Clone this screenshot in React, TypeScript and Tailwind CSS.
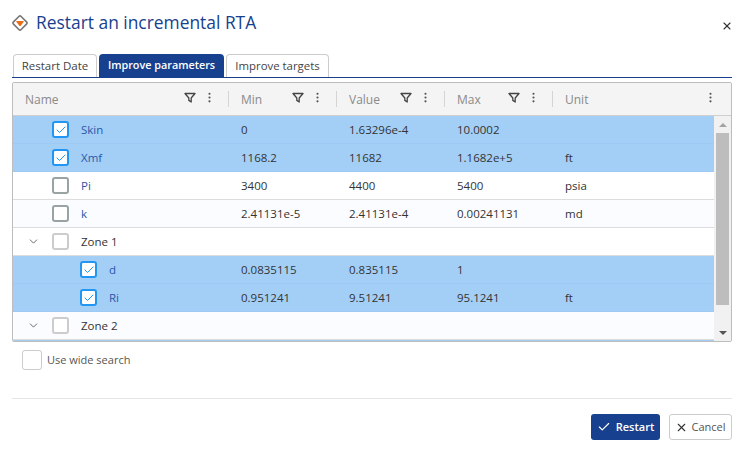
// libs
import { Check, ChevronDown, X, EllipsisVertical } from "lucide-react";

const FONT = "font-['Open_Sans','Noto_Sans',sans-serif]";

type RowData = {
  name: string;
  min?: string;
  value?: string;
  max?: string;
  unit?: string;
  checked?: boolean;
  group?: boolean;
  child?: boolean;
};

const rows: RowData[] = [
  { name: "Skin", min: "0", value: "1.63296e-4", max: "10.0002", checked: true },
  { name: "Xmf", min: "1168.2", value: "11682", max: "1.1682e+5", unit: "ft", checked: true },
  { name: "Pi", min: "3400", value: "4400", max: "5400", unit: "psia" },
  { name: "k", min: "2.41131e-5", value: "2.41131e-4", max: "0.00241131", unit: "md" },
  { name: "Zone 1", group: true },
  { name: "d", min: "0.0835115", value: "0.835115", max: "1", checked: true, child: true },
  { name: "Ri", min: "0.951241", value: "9.51241", max: "95.1241", unit: "ft", checked: true, child: true },
  { name: "Zone 2", group: true },
];

function FilterIcon() {
  return (
    <svg width="12" height="12" viewBox="0 0 12 12" fill="none" stroke="#444" strokeWidth="1.3">
      <path d="M1 1.5h10L7.2 6v4L4.8 8.4V6z" strokeLinejoin="round" />
    </svg>
  );
}

function Checkbox({ checked, light }: { checked?: boolean; light?: boolean }) {
  return (
    <div
      className={`w-[13px] h-[13px] box-content rounded-[3px] border-2 bg-white flex items-center justify-center ${
        checked ? "border-[#2196f3]" : light ? "border-[#ccc]" : "border-[#99a3a3]"
      }`}
    >
      {checked && <Check size={12} strokeWidth={2} className="text-[#2196f3]" />}
    </div>
  );
}

function HeaderCell({
  label,
  width,
  filter = true,
  pad = "pr-[12px]",
}: {
  label: string;
  width: string;
  filter?: boolean;
  pad?: string;
}) {
  return (
    <div className={`${width} h-full flex items-center pl-3 ${pad}`}>
      <span className="flex-1 text-xs text-[#8a8a8a] mt-[2px]">{label}</span>
      {filter && (
        <span className="mr-[7px] mb-[3px]">
          <FilterIcon />
        </span>
      )}
      <EllipsisVertical size={13} strokeWidth={2} className="text-[#555] mb-[3px]" />
    </div>
  );
}

function Row({ row, index }: { row: RowData; index: number }) {
  const bg = row.checked ? "bg-[#a3cff7]" : index % 2 === 1 ? "bg-[#fbfcff]" : "bg-white";
  const border = row.checked ? "border-[#9ccaf4]" : "border-[#dcdcdc]";
  return (
    <div className={`h-[28px] shrink-0 flex items-center border-b ${bg} ${border} text-[11.5px] text-[#333]`}>
      <div className="w-[215px] flex items-center">
        {row.group ? (
          <span className="w-[39px] pl-[14px] text-[#555]">
            <ChevronDown size={13} strokeWidth={1.6} />
          </span>
        ) : (
          <span className={row.child ? "w-[67px]" : "w-[39px]"} />
        )}
        <Checkbox checked={row.checked} light={row.group} />
        <span className={`ml-3 ${row.group ? "text-[#333]" : "text-[#2b57a8]"}`}>{row.name}</span>
      </div>
      <div className="w-[108px] pl-[13px]">{row.min}</div>
      <div className="w-[108px] pl-[13px]">{row.value}</div>
      <div className="w-[108px] pl-[13px]">{row.max}</div>
      <div className="pl-[13px]">{row.unit}</div>
    </div>
  );
}

function App() {
  return (
    <div className={`w-[741px] h-[450px] bg-white relative overflow-hidden ${FONT}`}>
      {/* title */}
      <div className="h-[54px] pt-[9px] pl-3 pr-[8px] flex items-start">
        <svg width="16" height="16" viewBox="0 0 16 16" className="mt-[6px] mr-2">
          <rect x="2.6" y="2.6" width="10.8" height="10.8" rx="1.6" transform="rotate(45 8 8)" fill="white" stroke="#777" strokeWidth="1.6" />
          <path d="M4.6 6.6h6.8L8 10.9z" fill="#ea6a12" strokeLinejoin="round" stroke="#ea6a12" />
        </svg>
        <h1 className="text-[17.4px] leading-[26px] font-medium text-[#17418f]">Restart an incremental RTA</h1>
        <X size={12} strokeWidth={2.2} className="ml-auto mt-[11px] text-[#333]" />
      </div>

      {/* tabs */}
      <div className="ml-3 mr-[9px] h-6 flex items-end gap-[2px] border-b border-[#17418f] pl-[1px]">
        <div className="h-[23px] w-[84px] flex items-center justify-center text-[11.5px] text-[#444] bg-white border border-b-0 border-[#ccc] rounded-t-[4px]">
          Restart Date
        </div>
        <div className="h-[23px] w-[125px] flex items-center justify-center text-[10.8px] font-semibold text-white bg-[#17418f] rounded-t-[4px]">
          Improve parameters
        </div>
        <div className="h-[23px] w-[103px] flex items-center justify-center text-[11.4px] text-[#444] bg-white border border-b-0 border-[#ccc] rounded-t-[4px]">
          Improve targets
        </div>
      </div>

      {/* grid */}
      <div className="ml-3 mr-[9px] mt-[4px] h-[260px] border border-[#bdbdbd] rounded-[2px] flex flex-col overflow-hidden">
        <div className="h-[33px] shrink-0 flex items-center bg-[#f4f4f4] border-b border-[#cfcfcf]">
          <HeaderCell label="Name" width="w-[215px]" />
          <div className="w-px h-4 bg-[#d4d4d4]" />
          <HeaderCell label="Min" width="w-[107px]" />
          <div className="w-px h-4 bg-[#d4d4d4]" />
          <HeaderCell label="Value" width="w-[107px]" />
          <div className="w-px h-4 bg-[#d4d4d4]" />
          <HeaderCell label="Max" width="w-[107px]" />
          <div className="w-px h-4 bg-[#d4d4d4]" />
          <HeaderCell label="Unit" width="flex-1" filter={false} pad="pr-[14px]" />
        </div>
        <div className="flex-1 flex min-h-0">
          <div className="flex-1 flex flex-col overflow-hidden">
            {rows.map((row, i) => (
              <Row key={row.name} row={row} index={i} />
            ))}
            <div className="flex-1 bg-[#a3cff7]" />
          </div>
          {/* scrollbar */}
          <div className="w-[17px] bg-[#f1f1f1] flex flex-col items-center">
            <div className="h-[17px] flex items-center justify-center">
              <div className="border-x-[4px] border-x-transparent border-b-[4px] border-b-[#a3a3a3]" />
            </div>
            <div className="w-[13px] h-[172px] bg-[#bdbdbd]" />
            <div className="mt-auto h-[17px] flex items-center justify-center">
              <div className="border-x-[4px] border-x-transparent border-t-[4px] border-t-[#555]" />
            </div>
          </div>
        </div>
      </div>

      {/* wide search */}
      <div className="mt-2 ml-[22px] flex items-center gap-[5px]">
        <div className="w-5 h-5 rounded-[3px] border border-[#ccc]" />
        <span className="text-[11px] leading-[18px] text-[#555]">Use wide search</span>
      </div>

      {/* footer */}
      <div className="ml-3 mr-[9px] mt-[28px] border-t border-[#e6e6e6] pt-[15px] flex justify-end gap-[9px]">
        <button className="h-[26px] w-[69px] flex items-center justify-center gap-[5px] rounded-[3px] bg-[#17418f] text-white text-[11px] font-semibold">
          <Check size={14} strokeWidth={2} />
          Restart
        </button>
        <button className="h-[26px] w-[63px] flex items-center justify-center gap-[3px] rounded-[3px] border border-[#ccc] bg-white text-[#555] text-[11px]">
          <X size={13} strokeWidth={2} className="text-[#333]" />
          Cancel
        </button>
      </div>
    </div>
  );
}

export default App;
